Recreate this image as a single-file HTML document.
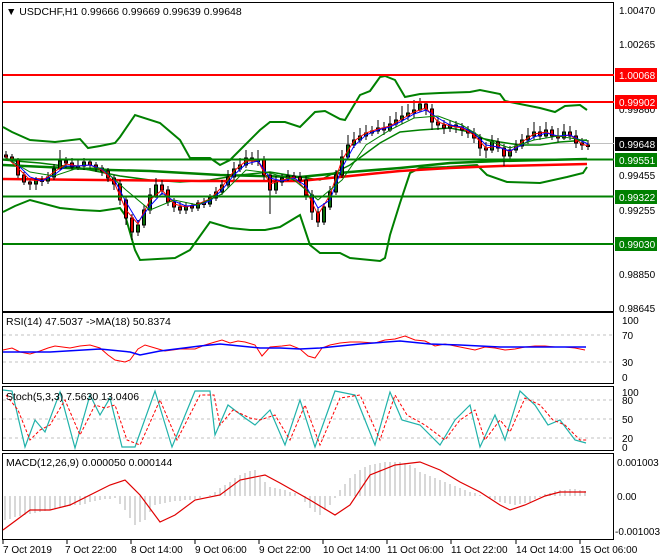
<!DOCTYPE html>
<html><head><meta charset="utf-8"><style>
html,body{margin:0;padding:0;background:#fff;width:660px;height:560px;overflow:hidden}
svg text{font-family:"Liberation Sans",sans-serif;font-size:10.5px;fill:#000}
svg .ax{font-size:10px}
</style></head><body>
<svg width="660" height="560" xmlns="http://www.w3.org/2000/svg">
<rect x="0" y="0" width="660" height="560" fill="#fff"/>
<g fill="none" stroke="#000" stroke-width="1">
<rect x="2.5" y="2.5" width="611" height="309"/>
<rect x="2.5" y="312.5" width="611" height="71"/>
<rect x="2.5" y="386.5" width="611" height="64"/>
<rect x="2.5" y="453.5" width="611" height="86"/>
</g>
<line x1="3" x2="614" y1="143.5" y2="143.5" stroke="#c0c0c0" stroke-width="1"/>
<!-- Bollinger -->
<g fill="none" stroke="#008000">
<polyline stroke-width="2" points="3,127 12,132 30,140 55,142 80,139 88,148 100,146 115,143 120,137 135,115 160,123 180,140 190,158 210,158 220,165 230,160 245,145 260,130 270,122 285,122 300,127 315,112 325,111 340,119 345,120 360,95 370,91 380,77 385,76 395,80 405,97 420,94 440,93 470,92 480,90 500,94 505,101 540,108 555,112 565,106 580,105 587,110"/>
<polyline stroke-width="2" points="3,212 15,206 30,200 60,208 80,210 100,211 120,208 125,215 135,250 140,260 175,258 190,250 210,222 230,228 250,230 265,230 280,227 300,215 310,245 320,253 340,253 350,258 380,261 385,258 390,235 400,203 410,173 420,168 447,167 477,165 487,175 507,182 540,183 567,177 583,173 587,167"/>
<polyline stroke-width="1.5" points="3,160 40,163 80,168 120,176 150,180 180,182 210,180 240,175 270,172 300,177 320,180 350,165 380,143 400,132 420,130 450,128 470,132 480,138 500,142 520,145 540,145 560,142 587,140"/>
<polyline stroke-width="2.5" points="3,165 110,170 150,171 220,175 300,177 350,172 400,168 450,163 500,161 587,159"/>
</g>
<polyline fill="none" stroke="#f00" stroke-width="2.5" points="3,179 100,180 200,181 300,181 350,176 400,171 450,168 500,166 587,164"/>
<!-- candles wicks -->
<path fill="none" stroke="#000" stroke-width="1" d="M6 151V160M12 154V163M18 158V178M24 172V185M30 179V190M36 177V190M42 176V186M48 172V184M54 164V180M60 150V165M66 157V168M72 158V170M78 160V170M84 158V170M90 160V169M96 162V172M102 165V176M108 168V182M114 175V190M120 180V205M126 196V225M132 214V240M138 220V236M144 205V228M150 188V214M156 178V198M162 180V195M168 186V206M174 198V212M180 202V214M186 202V214M192 203V212M198 200V211M204 198V208M210 194V207M216 187V201M222 180V195M228 170V188M234 162V180M240 158V172M246 150V168M252 152V165M258 150V166M264 156V180M270 172V214M276 176V194M282 174V186M288 170V181M294 172V181M300 172V184M306 176V200M312 190V220M318 208V227M324 203V225M330 186V210M336 170V195M342 150V178M348 135V160M354 132V148M360 128V143M366 125V140M372 126V136M378 120V134M384 122V135M390 116V132M396 112V127M402 106V124M408 104V120M414 100V118M420 98V112M426 102V115M432 104V130M438 117V130M444 120V134M450 120V132M456 121V133M462 123V136M468 126V138M474 128V143M480 134V156M486 142V158M492 135V153M498 138V152M504 144V166M510 146V160M516 140V153M522 134V149M528 128V144M534 122V140M540 126V140M546 122V138M552 126V140M558 128V142M564 124V140M570 126V140M576 130V148M582 138V150M588 140V150"/>
<!-- bear bodies -->
<path fill="#e00000" stroke="#000" stroke-width="1" d="M4.5 155h3v2h-3zM10.5 157h3v3h-3zM16.5 160h3v15h-3zM22.5 175h3v7h-3zM28.5 182h3v2h-3zM40.5 180h3v1.5h-3zM64.5 161h3v2h-3zM70.5 163h3v4h-3zM88.5 162h3v3h-3zM94.5 165h3v3h-3zM100.5 168h3v3h-3zM106.5 171h3v7h-3zM112.5 178h3v6h-3zM118.5 184h3v16h-3zM124.5 200h3v18h-3zM130.5 218h3v14h-3zM160.5 185h3v5h-3zM166.5 190h3v12h-3zM172.5 202h3v5h-3zM178.5 207h3v3h-3zM190.5 206h3v2h-3zM202.5 203h3v1.5h-3zM250.5 158h3v3h-3zM262.5 160h3v15h-3zM268.5 175h3v15h-3zM292.5 176h3v1.5h-3zM298.5 177h3v3h-3zM304.5 180h3v15h-3zM310.5 195h3v17h-3zM316.5 212h3v10h-3zM382.5 128h3v2h-3zM424.5 104h3v5h-3zM430.5 109h3v13h-3zM436.5 122h3v3h-3zM442.5 125h3v3h-3zM454.5 125h3v2h-3zM460.5 127h3v3h-3zM466.5 130h3v3h-3zM472.5 133h3v5h-3zM478.5 138h3v10h-3zM484.5 148h3v2h-3zM496.5 142h3v6h-3zM502.5 148h3v8h-3zM538.5 132h3v4h-3zM550.5 130h3v6h-3zM556.5 136h3v2h-3zM568.5 132h3v4h-3zM574.5 136h3v7h-3zM580.5 143h3v2h-3zM586.5 145h3v1.5h-3z"/>
<!-- bull bodies -->
<path fill="#0a6e0a" stroke="#000" stroke-width="1" d="M34.5 180h3v4h-3zM46.5 177h3v4h-3zM52.5 169h3v8h-3zM58.5 161h3v8h-3zM76.5 166h3v1.5h-3zM82.5 162h3v4h-3zM136.5 225h3v7h-3zM142.5 210h3v15h-3zM148.5 195h3v15h-3zM154.5 185h3v10h-3zM184.5 206h3v4h-3zM196.5 203h3v5h-3zM208.5 198h3v6h-3zM214.5 192h3v6h-3zM220.5 185h3v7h-3zM226.5 177h3v8h-3zM232.5 169h3v8h-3zM238.5 165h3v4h-3zM244.5 158h3v7h-3zM256.5 160h3v1.5h-3zM274.5 182h3v8h-3zM280.5 178h3v4h-3zM286.5 176h3v2h-3zM322.5 207h3v15h-3zM328.5 192h3v15h-3zM334.5 175h3v17h-3zM340.5 157h3v18h-3zM346.5 145h3v12h-3zM352.5 140h3v5h-3zM358.5 136h3v4h-3zM364.5 133h3v3h-3zM370.5 131h3v2h-3zM376.5 128h3v3h-3zM388.5 124h3v6h-3zM394.5 120h3v4h-3zM400.5 116h3v4h-3zM406.5 113h3v3h-3zM412.5 110h3v3h-3zM418.5 104h3v6h-3zM448.5 125h3v3h-3zM490.5 142h3v8h-3zM508.5 150h3v6h-3zM514.5 146h3v4h-3zM520.5 140h3v6h-3zM526.5 136h3v4h-3zM532.5 132h3v4h-3zM544.5 130h3v6h-3zM562.5 132h3v6h-3z"/>
<!-- thin MAs -->
<polyline fill="none" stroke="#f00" stroke-width="1" points="6,157 18,168 30,180 42,181 54,172 66,164 78,166 90,165 102,170 114,182 126,210 138,224 150,200 162,190 174,204 186,207 198,204 210,199 222,187 234,171 246,161 258,161 270,184 282,180 294,177 306,190 318,215 330,195 342,160 354,141 366,133 378,129 390,126 402,119 414,112 426,108 438,122 450,126 462,128 474,135 486,148 498,146 510,152 522,142 534,134 546,132 558,137 570,135 582,144 588,146"/>
<polyline fill="none" stroke="#00f" stroke-width="1" points="6,158 18,165 30,177 42,181 54,175 66,166 78,166 90,165 102,169 114,179 126,202 138,222 150,206 162,193 174,201 186,206 198,205 210,201 222,190 234,175 246,164 258,161 270,178 282,181 294,178 306,186 318,208 330,200 342,168 354,146 366,135 378,130 390,127 402,121 414,114 426,110 438,118 450,125 462,127 474,133 486,145 498,147 510,151 522,145 534,137 546,133 558,136 570,135 582,141 588,144"/>
<polyline fill="none" stroke="#008000" stroke-width="1" points="6,158 30,172 54,176 78,168 102,168 126,190 150,210 174,200 198,205 222,194 246,170 270,173 294,180 318,200 342,180 366,145 390,130 414,118 438,116 462,125 486,140 510,148 534,140 558,136 588,141"/>
<!-- horizontal levels -->
<line x1="3" x2="614" y1="75" y2="75" stroke="#f00" stroke-width="2"/>
<line x1="3" x2="614" y1="102" y2="102" stroke="#f00" stroke-width="2"/>
<line x1="3" x2="614" y1="159.5" y2="159.5" stroke="#008000" stroke-width="2"/>
<line x1="3" x2="614" y1="196.5" y2="196.5" stroke="#008000" stroke-width="2"/>
<line x1="3" x2="614" y1="244" y2="244" stroke="#008000" stroke-width="2"/>
<!-- grid dashed in subpanels -->
<g stroke="#c0c0c0" stroke-dasharray="3,3">
<line x1="3" x2="613" y1="335" y2="335"/><line x1="3" x2="613" y1="362" y2="362"/>
<line x1="3" x2="613" y1="400" y2="400"/><line x1="3" x2="613" y1="419" y2="419"/><line x1="3" x2="613" y1="438" y2="438"/>
</g>
<!-- RSI -->
<polyline fill="none" stroke="#f00" stroke-width="1" points="3,350 12,348 20,352 30,354 40,351 48,348 55,346 70,348 80,346 90,345 100,348 108,355 115,360 125,362 130,360 138,349 145,345 155,348 165,351 180,349 195,349 205,345 215,342 222,340 230,343 238,341 245,342 255,345 262,356 270,347 282,346 290,345 300,349 308,356 315,358 322,348 330,345 340,343 350,342 360,342 375,343 385,340 395,339 405,336 415,340 425,341 435,346 445,344 455,346 465,348 475,350 485,347 495,348 505,350 515,349 525,347 535,346 545,346 555,347 565,347 575,348 585,350"/>
<polyline fill="none" stroke="#00f" stroke-width="1.5" points="3,352 50,352 100,349 130,352 140,355 160,351 200,346 220,344 240,346 260,348 280,348 300,349 320,348 340,346 360,344 400,341 430,344 460,345 500,347 540,347 586,347"/>
<!-- Stoch -->
<polyline fill="none" stroke="#20b2aa" stroke-width="1.2" points="3,390 12,391 25,447 35,420 45,432 60,392 75,448 90,395 100,415 110,398 122,447 135,447 155,391 172,447 195,391 210,391 215,435 228,405 245,418 255,425 270,410 285,445 300,400 315,447 335,391 355,395 375,445 390,392 402,420 420,425 440,445 455,420 470,405 480,447 495,415 505,440 520,391 535,405 548,425 560,420 575,440 586,443"/>
<polyline fill="none" stroke="#f00" stroke-width="1" stroke-dasharray="3,2" points="6,395 18,410 30,440 40,430 50,425 65,400 80,435 95,405 105,408 115,405 127,440 140,445 160,400 177,440 200,395 214,395 220,425 233,410 250,418 260,420 275,415 290,440 305,405 320,445 340,398 360,395 380,440 395,395 407,415 425,425 445,440 460,420 475,410 485,440 500,420 510,432 525,398 540,405 553,420 565,425 580,440 588,440"/>
<!-- MACD histogram -->
<path fill="none" stroke="#b0b0b0" stroke-width="1" d="M5 496V520M10 496V519M15 496V517M20 496V516M25 496V515M30 496V514M35 496V513M40 496V512M45 496V511M50 496V510M55 496V509M60 496V508M65 496V507M70 496V506M75 496V505M80 496V505M85 496V504M90 496V502M95 496V501M100 496V500M105 496V499M110 496V499M115 496V498M120 496V504M125 496V510M130 496V518M135 496V525M140 496V522M145 496V520M150 496V512M155 496V505M160 496V504M165 496V503M170 496V502M175 496V501M180 496V501M185 496V500M190 496V500M195 496V499M200 496V498M210 496V495M215 496V492M220 496V488M225 496V485M230 496V482M235 496V478M240 496V475M245 496V473M250 496V471M255 496V470M260 496V477M265 496V482M270 496V487M275 496V488M280 496V489M285 496V490M290 496V492M295 496V493M305 496V502M310 496V508M315 496V512M320 496V515M325 496V510M330 496V505M335 496V498M340 496V490M345 496V484M350 496V478M355 496V474M360 496V470M365 496V467M370 496V465M375 496V464M380 496V463M385 496V462M390 496V462M395 496V462M400 496V462M405 496V463M410 496V465M415 496V468M420 496V472M425 496V474M430 496V476M435 496V478M440 496V480M445 496V482M450 496V484M455 496V486M460 496V488M465 496V490M470 496V492M475 496V493M480 496V495M490 496V499M495 496V500M500 496V502M505 496V503M510 496V504M515 496V505M520 496V504M525 496V503M530 496V502M535 496V499M540 496V497M545 496V494M550 496V493M555 496V491M560 496V490M565 496V490M570 496V489M575 496V489M580 496V490M585 496V491"/>
<polyline fill="none" stroke="#e00000" stroke-width="1.2" points="3,530 30,510 50,510 70,505 110,485 125,480 140,495 160,522 175,515 195,500 220,495 240,480 265,475 280,483 310,500 335,515 350,505 370,475 395,465 420,462 440,470 460,482 480,492 500,505 510,510 525,505 545,496 560,492 586,492"/>
<text x="6" y="15">&#9660; USDCHF,H1  0.99666 0.99669 0.99639 0.99648</text>
<text x="6" y="325">RSI(14) 47.5037  -&gt;MA(18) 50.8374</text>
<text x="6" y="400">Stoch(5,3,3) 7.5630 13.0406</text>
<text x="6" y="466">MACD(12,26,9) 0.000050 0.000144</text>
<g>
<text class="ax" x="619" y="14">1.00470</text>
<text class="ax" x="619" y="48">1.00265</text>
<text class="ax" x="619" y="113">0.99860</text>
<rect x="615" y="68" width="42" height="14" fill="#f00"/><text class="ax" x="619" y="79" style="fill:#fff">1.00068</text>
<rect x="615" y="95" width="42" height="14" fill="#f00"/><text class="ax" x="619" y="106" style="fill:#fff">0.99902</text>
<rect x="615" y="137" width="42" height="14" fill="#000"/><text class="ax" x="619" y="148" style="fill:#fff">0.99648</text>
<rect x="615" y="153" width="42" height="14" fill="#008000"/><text class="ax" x="619" y="164" style="fill:#fff">0.99551</text>
<text class="ax" x="619" y="179">0.99455</text>
<rect x="615" y="190" width="42" height="14" fill="#008000"/><text class="ax" x="619" y="201" style="fill:#fff">0.99322</text>
<text class="ax" x="619" y="214">0.99255</text>
<rect x="615" y="237" width="42" height="14" fill="#008000"/><text class="ax" x="619" y="248" style="fill:#fff">0.99030</text>
<text class="ax" x="619" y="278">0.98850</text>
<text class="ax" x="619" y="312">0.98645</text>
<text class="ax" x="622" y="324">100</text><text class="ax" x="622" y="339">70</text><text class="ax" x="622" y="366">30</text><text class="ax" x="622" y="381">0</text>
<text class="ax" x="622" y="396">100</text><text class="ax" x="622" y="404">80</text><text class="ax" x="622" y="423">50</text><text class="ax" x="622" y="442">20</text><text class="ax" x="622" y="451">0</text>
<text class="ax" x="617" y="466">0.001003</text><text class="ax" x="617" y="500">0.00</text><text class="ax" x="615" y="535">-0.001003</text>
</g>
<g>
<text class="ax" x="3" y="553">7 Oct 2019</text><text class="ax" x="65" y="553">7 Oct 22:00</text><text class="ax" x="131" y="553">8 Oct 14:00</text>
<text class="ax" x="195" y="553">9 Oct 06:00</text><text class="ax" x="259" y="553">9 Oct 22:00</text><text class="ax" x="323" y="553">10 Oct 14:00</text>
<text class="ax" x="387" y="553">11 Oct 06:00</text><text class="ax" x="451" y="553">11 Oct 22:00</text><text class="ax" x="516" y="553">14 Oct 14:00</text>
<text class="ax" x="580" y="553">15 Oct 06:00</text>
</g>
<path stroke="#000" d="M3 540V544M67 540V544M131 540V544M195 540V544M259 540V544M323 540V544M387 540V544M451 540V544M516 540V544M580 540V544"/>
</svg>
</body></html>
